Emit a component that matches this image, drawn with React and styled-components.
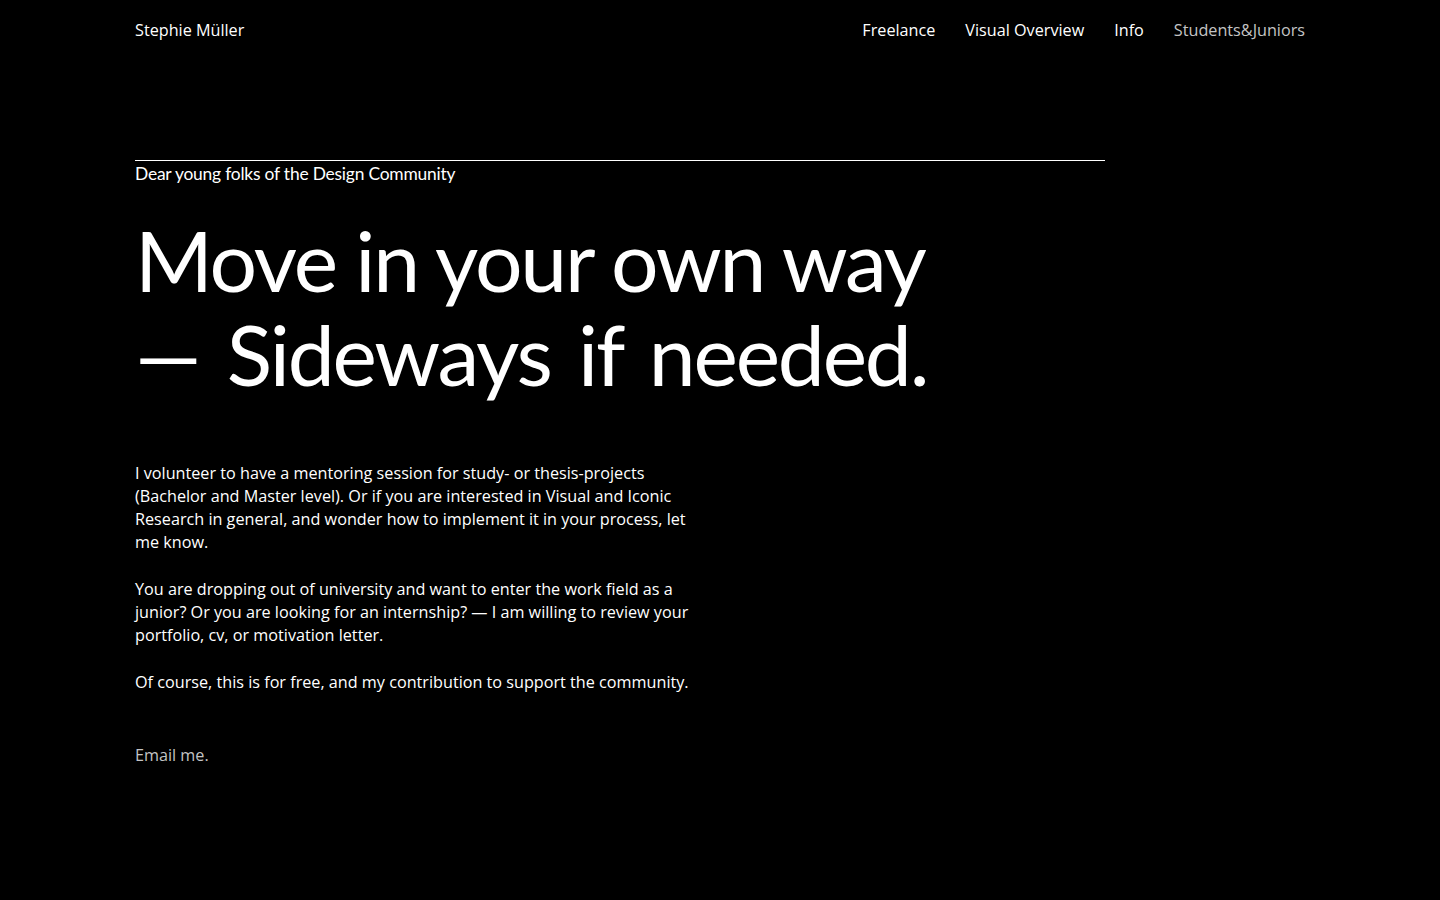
import React from "react";
import styled, { createGlobalStyle } from "styled-components";

const GlobalStyle = createGlobalStyle`
  html, body {
    margin: 0;
    padding: 0;
    background: #000;
    color: #fff;
    font-family: "Open Sans", "Liberation Sans", sans-serif;
  }
`

const Page = styled.div`
  min-height: 900px;
  background: #000;
  padding: 0 135px;
  box-sizing: border-box;
`
const Header = styled.header`
  display: flex;
  align-items: center;
  justify-content: space-between;
  height: 60px;
  font-size: 16.2px;
`
const Brand = styled.a`
  color: #fff;
  text-decoration: none;
`
const Nav = styled.nav`
  display: flex;
  gap: 30px;
`
const NavLink = styled.a`
  color: ${p => (p.active ? "#c4c4c4" : "#fff")};
  text-decoration: none;
`
const Intro = styled.section`
  margin-top: 100px;
  width: 970px;
`
const Rule = styled.div`
  border-top: 1px solid #fff;
`
const Kicker = styled.p`
  margin: 2px 0 0;
  font-family: Lato, "Noto Sans", sans-serif;
  font-size: 17.4px;
  line-height: 22px;
  letter-spacing: -0.2px;
`
const Headline = styled.h1`
  margin: 28px 0 0;
  font-family: Lato, "Noto Sans", sans-serif;
  font-weight: 400;
  font-size: 84px;
  line-height: 94px;
  letter-spacing: -2.2px;
`
const HeadLine = styled.span`
  display: block;
  word-spacing: ${p => p.$spread || 0}px;
`
const Body = styled.div`
  margin-top: 61px;
  width: 565px;
  font-size: 16.2px;
  line-height: 23px;
`
const Para = styled.p`
  margin: 0 0 24px;
`
const Mail = styled.a`
  display: inline-block;
  margin-top: 26px;
  color: #c4c4c4;
  text-decoration: none;
`

export default function App() {
    return (<>
            <GlobalStyle />
            <Page>
                <Header>
                    <Brand href="#">Stephie Müller</Brand>
                    <Nav>
                        <NavLink href="#">Freelance</NavLink>
                        <NavLink href="#">Visual Overview</NavLink>
                        <NavLink href="#">Info</NavLink>
                        <NavLink href="#" active>Students&amp;Juniors</NavLink>
                    </Nav>
                </Header>
                <Intro>
                    <Rule />
                    <Kicker>Dear young folks of the Design Community</Kicker>
                    <Headline>
                        <HeadLine>Move in your own way</HeadLine>
                        <HeadLine $spread={8}>— Sideways if needed.</HeadLine>
                    </Headline>
                </Intro>
                <Body>
                    <Para>
                        I volunteer to have a mentoring session for study- or thesis-projects
                        (Bachelor and Master level). Or if you are interested in Visual and Iconic
                        Research in general, and wonder how to implement it in your process, let
                        me know.
                    </Para>
                    <Para>
                        You are dropping out of university and want to enter the work field as a
                        junior? Or you are looking for an internship? — I am willing to review your
                        portfolio, cv, or motivation letter.
                    </Para>
                    <Para>
                        Of course, this is for free, and my contribution to support the community.
                    </Para>
                    <Mail href="#">Email me.</Mail>
                </Body>
            </Page>
        </>
    )
}
